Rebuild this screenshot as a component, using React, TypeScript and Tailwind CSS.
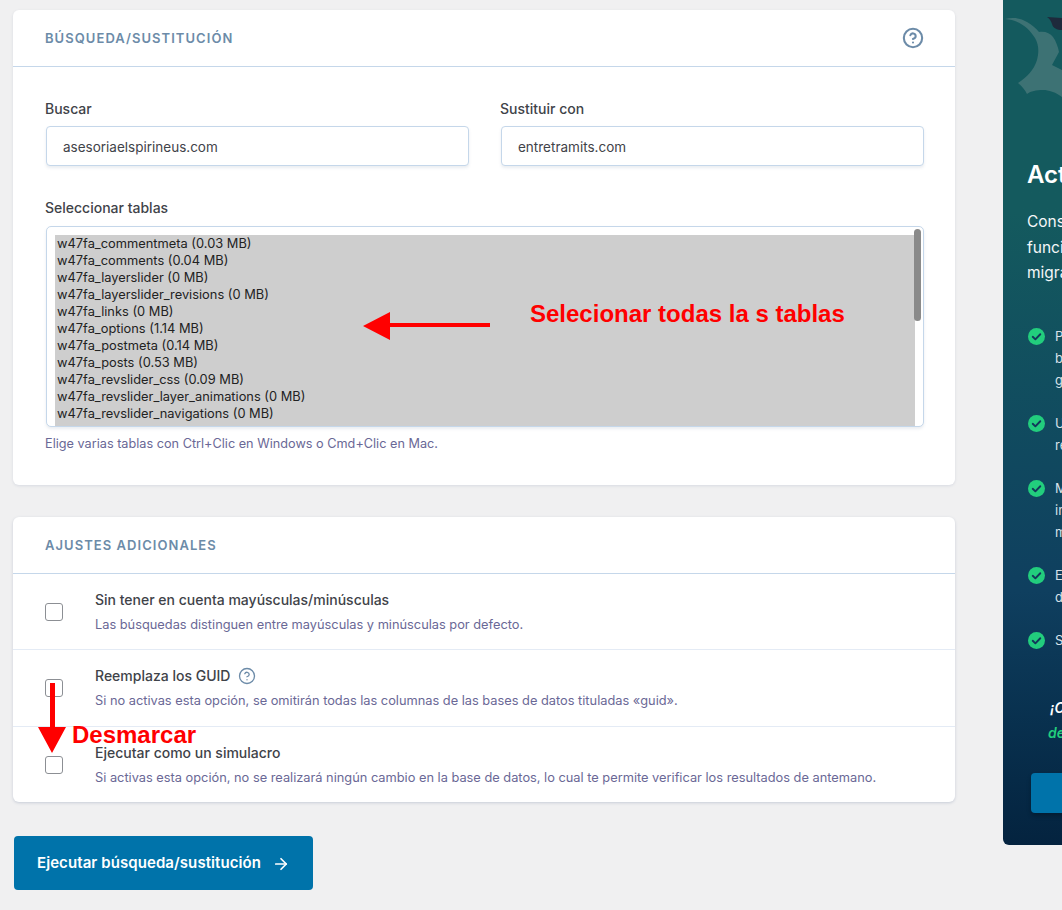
import { ArrowRight, CircleHelp } from "lucide-react";

const tables = [
    "w47fa_commentmeta (0.03 MB)",
    "w47fa_comments (0.04 MB)",
    "w47fa_layerslider (0 MB)",
    "w47fa_layerslider_revisions (0 MB)",
    "w47fa_links (0 MB)",
    "w47fa_options (1.14 MB)",
    "w47fa_postmeta (0.14 MB)",
    "w47fa_posts (0.53 MB)",
    "w47fa_revslider_css (0.09 MB)",
    "w47fa_revslider_layer_animations (0 MB)",
    "w47fa_revslider_navigations (0 MB)",
];

const features = [
    { lines: ["Perfiles guardados para", "bases de datos y", "guardar ajustes"], className: "pt-0" },
    { lines: ["Una copia de seguridad", "restaurable"], className: "pt-[21px]" },
    { lines: ["Migraciones de medios", "incluidos temas y", "multisitio"], className: "pt-[21px]" },
    { lines: ["El mejor soporte", "de nuestro equipo"], className: "pt-[21px]" },
    { lines: ["Sincronización"], className: "pt-[21px]" },
];

const CheckBadge = () => (
    <svg viewBox="0 0 18 18" className="w-[17px] h-[17px] shrink-0 mt-[3px] ml-[1px]">
        <circle cx="9" cy="9" r="9" fill="#22cd7d" />
        <path d="M5 9.3l2.8 2.7L13 6.6" fill="none" stroke="#12375a" strokeWidth="2" strokeLinecap="round" strokeLinejoin="round" />
    </svg>
);

const CardHeader = ({ title, help }: { title: string; help?: boolean }) => (
    <div className="h-[57px] flex items-center justify-between pl-[32px] pr-[31px] border-b border-[#c5d7ea]">
        <h2 className="pt-[2px] text-[13px] font-semibold tracking-[1.05px] text-[#6c8ba8]">{title}</h2>
        {help && <CircleHelp className="w-[22px] h-[22px] text-[#6c8ba8]" strokeWidth={2.25} />}
    </div>
);

const TextField = ({ label, value }: { label: string; value: string }) => (
    <div className="flex flex-col">
        <label className="text-[14px] leading-[20px] font-medium text-[#3f4349] mb-[7px]">{label}</label>
        <div className="ml-[1px] h-[40px] flex items-center pl-[16px] pt-[2px] bg-white border border-[#c5d7ea] rounded-[4px] shadow-[0_2px_3px_rgba(80,110,140,0.12)] text-[13.5px] text-[#3f4349]">
            {value}
        </div>
    </div>
);

const OptionRow = ({
    title,
    help,
    desc,
    className,
}: {
    title: string;
    help?: boolean;
    desc: string;
    className: string;
}) => (
    <div className={`flex items-center pl-[32px] ${className}`}>
        <div className="w-[18px] h-[18px] rounded-[3px] border border-[#8c8f94] bg-white shrink-0" />
        <div className="ml-[32px]">
            <div className="flex items-center text-[14px] leading-[20px] font-medium text-[#3f4349]">
                {title}
                {help && <CircleHelp className="ml-[8px] w-[18px] h-[18px] text-[#6c8ba8]" strokeWidth={1.75} />}
            </div>
            <p className="mt-[6px] text-[12.8px] leading-[18px] text-[#6a6896]">{desc}</p>
        </div>
    </div>
);

export default function App() {
    return (
        <div className="relative h-[910px] w-[1062px] overflow-hidden bg-[#f0f0f1] font-['Inter',sans-serif]">
            <div className="flex items-start pl-[13px]">
                <main className="w-[942px] shrink-0 pt-[10px]">
                    <section className="relative h-[475px] bg-white rounded-[6px] shadow-[0_1px_3px_rgba(80,100,140,0.15)]">
                        <CardHeader title="BÚSQUEDA/SUSTITUCIÓN" help />
                        <div className="px-[32px] pt-[32px]">
                            <div className="grid grid-cols-[424px_424px] gap-x-[31px]">
                                <TextField label="Buscar" value="asesoriaelspirineus.com" />
                                <TextField label="Sustituir con" value="entretramits.com" />
                            </div>
                            <label className="block mt-[32px] mb-[8px] text-[14px] leading-[20px] font-medium text-[#3f4349]">
                                Seleccionar tablas
                            </label>
                            <div className="relative ml-[1px] h-[201px] w-[878px] pl-[8px] pt-[8px] pr-[8px] bg-white border border-[#c5d7ea] rounded-[5px] shadow-[0_2px_3px_rgba(80,110,140,0.12)] overflow-hidden">
                                <div className="h-[192px] bg-[#cecece] pl-[2px] pr-0 text-[12.85px] leading-[17px] text-[#222]">
                                    {tables.map((t) => (
                                        <div key={t} className="h-[17px]">
                                            {t}
                                        </div>
                                    ))}
                                </div>
                                <div className="absolute right-[2px] top-[2px] w-[7px] h-[92px] rounded-full bg-[#8a8a8a]" />
                            </div>
                            <p className="mt-[8px] text-[12.7px] leading-[18px] text-[#6a6896]">
                                Elige varias tablas con Ctrl+Clic en Windows o Cmd+Clic en Mac.
                            </p>
                        </div>
                    </section>

                    <section className="mt-[32px] bg-white rounded-[6px] shadow-[0_1px_3px_rgba(80,100,140,0.25)]">
                        <CardHeader title="AJUSTES ADICIONALES" />
                        <OptionRow
                            className="h-[76px] border-b border-[#e4ebf5]"
                            title="Sin tener en cuenta mayúsculas/minúsculas"
                            desc="Las búsquedas distinguen entre mayúsculas y minúsculas por defecto."
                        />
                        <OptionRow
                            className="h-[77px] border-b border-[#e4ebf5]"
                            title="Reemplaza los GUID"
                            help
                            desc="Si no activas esta opción, se omitirán todas las columnas de las bases de datos tituladas «guid»."
                        />
                        <OptionRow
                            className="h-[75px]"
                            title="Ejecutar como un simulacro"
                            desc="Si activas esta opción, no se realizará ningún cambio en la base de datos, lo cual te permite verificar los resultados de antemano."
                        />
                    </section>

                    <button className="mt-[34px] ml-[1px] h-[54px] w-[299px] pt-[1px] flex items-center justify-center gap-[11px] rounded-[4px] bg-[#0073aa] text-white text-[15px] tracking-[0.08px] font-semibold">
                        Ejecutar búsqueda/sustitución
                        <ArrowRight className="w-[18px] h-[18px]" strokeWidth={2.25} />
                    </button>
                </main>

                <aside className="ml-[48px] w-[320px] shrink-0 h-[845px] rounded-bl-[6px] bg-gradient-to-b from-[#145a5e] from-25% via-[#0f3f5f] via-70% to-[#04233f] text-white pl-[24px] relative overflow-hidden">
                    <svg viewBox="0 0 60 110" className="absolute left-0 top-0 w-[60px] h-[110px]">
                        <path
                            d="M2 19C10 17 18 18 24 22C29 25 33 28 36 32C42 31 47 33 50 37C53 41 55 47 56 52L49 65L59 70V97C52 92 46 90 40 90C33 90 28 91 24 94C22 90 19 86 15 83C24 77 31 70 34 60C36 52 36 45 32 38C26 28 16 20 2 19Z"
                            fill="#3d7274"
                        />
                        <path d="M44 17L59 18V30C54 30 50 28 49 24C48 21 47 19 44 17Z" fill="#1e2a3c" />
                    </svg>
                    <h3 className="pt-[160px] text-[24px] leading-[30px] font-semibold whitespace-nowrap">Actualiza a Pro</h3>
                    <p className="mt-[19px] text-[15.5px] leading-[25.5px] text-[#f4f7f8] whitespace-nowrap">
                        Consigue todas las
                        <br />
                        funciones premium para
                        <br />
                        migraciones
                    </p>
                    <div className="mt-[39px] flex flex-col">
                        {features.map((f) => (
                            <div key={f.lines[0]} className={`flex gap-[10px] ${f.className}`}>
                                <CheckBadge />
                                <div className="text-[13px] leading-[22px] text-[#d8e2ea] whitespace-nowrap">
                                    {f.lines.map((l) => (
                                        <div key={l}>{l}</div>
                                    ))}
                                </div>
                            </div>
                        ))}
                    </div>
                    <p className="mt-[46px] pl-[23px] text-[14px] leading-[22px] font-semibold italic whitespace-nowrap">¡Compra ahora</p>
                    <p className="mt-[3px] pl-[21px] text-[14px] leading-[22px] font-semibold italic text-[#22cd7d] whitespace-nowrap">de oferta</p>
                    <div className="mt-[29px] ml-[4px] h-[40px] w-[260px] rounded-[4px] bg-[#0073aa] shadow-[0_3px_4px_rgba(0,0,0,0.25)]" />
                </aside>
            </div>

            {/* flechas y notas pintadas encima de la captura */}
            <svg viewBox="0 0 130 30" className="absolute left-[362px] top-[311px] w-[130px] h-[30px]">
                <path d="M1 15L28 1V12H128V16H28V29Z" fill="#ff0000" />
            </svg>
            <span className="absolute left-[530px] top-[300px] text-[24px] leading-[28px] font-bold text-[#ff0000] font-['Liberation_Sans',sans-serif] whitespace-nowrap">
                Selecionar todas la s tablas
            </span>
            <svg viewBox="0 0 30 71" className="absolute left-[37px] top-[683px] w-[30px] h-[71px]">
                <path d="M13 0H18V44H29L15 70L1 44H13Z" fill="#ff0000" />
            </svg>
            <span className="absolute left-[72px] top-[721px] text-[24px] leading-[28px] font-bold text-[#ff0000] font-['Liberation_Sans',sans-serif] whitespace-nowrap">
                Desmarcar
            </span>
        </div>
    );
}
